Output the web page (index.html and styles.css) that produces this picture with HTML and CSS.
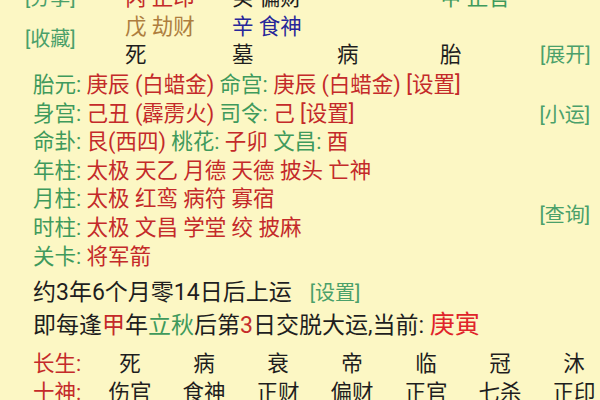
FILE: index.html
```html
<!DOCTYPE html>
<html lang="zh">
<head>
<meta charset="utf-8">
<link rel="stylesheet" href="styles.css">
</head>
<body>
<div class="page">
  <div class="top">
    <span class="cell lnk g r1 c0">[分享]</span>
    <span class="cell red r1 c1">丙 正印</span>
    <span class="cell blk r1 c2">癸 偏财</span>
    <span class="cell grn r1 c4">甲 正官</span>

    <span class="cell brn r2 c1">戊 劫财</span>
    <span class="cell blu r2 c2">辛 食神</span>
    <span class="cell lnk g shou c0">[收藏]</span>

    <span class="cell blk r3 c1">死</span>
    <span class="cell blk r3 c2">墓</span>
    <span class="cell blk r3 c3">病</span>
    <span class="cell blk r3 c4">胎</span>
    <span class="cell lnk g r3 c5">[展开]</span>
  </div>

  <div class="info">
    <span class="side lnk g xiao">[小运]</span>
    <span class="side lnk g cha">[查询]</span>
    <div class="line"><span class="grn">胎元:</span> <span class="red">庚辰 (白蜡金)</span> <span class="grn">命宫:</span> <span class="red">庚辰 (白蜡金)</span> <span class="red">[设置]</span></div>
    <div class="line"><span class="grn">身宫:</span> <span class="red">己丑 (霹雳火)</span> <span class="grn">司令:</span> <span class="red">己</span> <span class="red">[设置]</span></div>
    <div class="line"><span class="grn">命卦:</span> <span class="red">艮(西四)</span> <span class="grn">桃花:</span> <span class="red">子卯</span> <span class="grn">文昌:</span> <span class="red">酉</span></div>
    <div class="line"><span class="grn">年柱:</span> <span class="red">太极 天乙 月德 天德 披头 亡神</span></div>
    <div class="line"><span class="grn">月柱:</span> <span class="red">太极 红鸾 病符 寡宿</span></div>
    <div class="line"><span class="grn">时柱:</span> <span class="red">太极 文昌 学堂 绞 披麻</span></div>
    <div class="line"><span class="grn">关卡:</span> <span class="red">将军箭</span></div>
  </div>

  <div class="yun">
    <div class="yline"><span class="blk">约3年6个月零14日后上运</span><span class="lnk g set">[设置]</span></div>
    <div class="yline"><span class="blk">即每逢</span><span class="red">甲</span><span class="blk">年</span><span class="grn">立秋</span><span class="blk">后第</span><span class="red">3</span><span class="blk">日交脱大运,当前: </span><span class="cur">庚寅</span></div>
  </div>

  <div class="table">
    <span class="lab">长生:</span>
    <span class="v">死</span><span class="v">病</span><span class="v">衰</span><span class="v">帝</span><span class="v">临</span><span class="v">冠</span><span class="v">沐</span>
    <span class="lab">十神:</span>
    <span class="v">伤官</span><span class="v">食神</span><span class="v">正财</span><span class="v">偏财</span><span class="v">正官</span><span class="v">七杀</span><span class="v">正印</span>
  </div>
</div>
</body>
</html>
```

FILE: styles.css
```css
html, body {
  margin: 0;
  padding: 0;
  width: 600px;
  height: 400px;
  overflow: hidden;
  background: #fcf7c4;
}

.page {
  font-family: Roboto, "Noto Sans CJK SC", sans-serif;
  font-size: 21.5px;
  color: #222;
  white-space: nowrap;
}

.red { color: #c42a2a; }
.grn { color: #3f9a5c; }
.blk { color: #1e1e1e; }
.brn { color: #ae7e3e; }
.blu { color: #27279a; }
.lnk { font-size: 20px; }
.lnk.g { color: #4aa06a; }

/* top section */
.top {
  margin-top: -16px;
  padding-left: 25px;
  display: grid;
  grid-template-columns: 100px 107px 105px 103px 100px 1fr;
  grid-template-rows: 28.5px 28.5px 28.5px;
  align-items: center;
}
.cell { line-height: 28.5px; }
.r1 { grid-row: 1; }
.r2 { grid-row: 2; }
.r3 { grid-row: 3; }
.c0 { grid-column: 1; }
.c1 { grid-column: 2; }
.c2 { grid-column: 3; }
.c3 { grid-column: 4; }
.c4 { grid-column: 5; }
.c5 { grid-column: 6; }
.shou { grid-row: 2 / span 2; align-self: center; margin-top: -3px; }

/* info lines */
.info {
  padding: 1.5px 10px 0 33px;
  display: grid;
  grid-template-columns: 1fr auto;
  grid-auto-rows: 28.6px;
  align-items: center;
}
.line { grid-column: 1; line-height: 28.6px; }
.side { grid-column: 2; }
.xiao { grid-row: 2; }
.cha { grid-row: 5 / span 2; align-self: center; }

/* yun lines */
.yun {
  padding-left: 33px;
  margin-top: 6px;
  font-size: 23px;
}
.yline { height: 32px; line-height: 32px; }
.set { margin-left: 18px; }
.cur { color: #e0242a; font-size: 25px; }

/* table */
.table {
  margin-top: 8px;
  padding-left: 33px;
  display: grid;
  grid-template-columns: 60px repeat(7, 74px);
  grid-template-rows: 29px 29px;
  align-items: center;
}
.lab { color: #c42a2a; line-height: 29px; }
.v { text-align: center; line-height: 29px; color: #1e1e1e; }
```
